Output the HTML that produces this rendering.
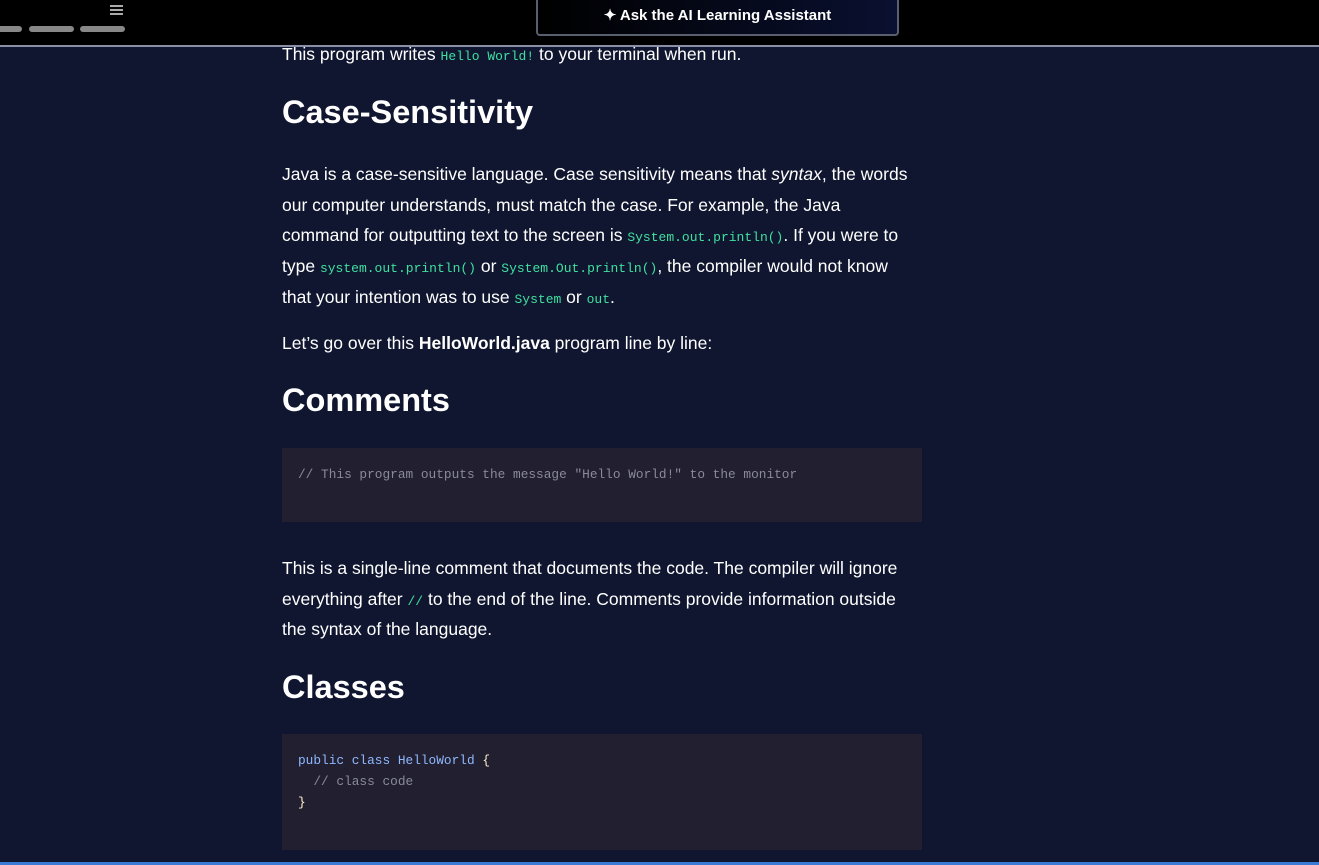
<!DOCTYPE html>
<html><head><meta charset="utf-8"><style>
*{margin:0;padding:0;box-sizing:border-box}
body{width:1319px;height:865px;overflow:hidden;background:#10162f;font-family:"Liberation Sans",sans-serif;color:#fff;position:relative}
.top{position:absolute;left:0;top:0;width:1319px;height:47px;background:#000;border-bottom:2px solid #8a8fa8}
.bar{position:absolute;top:26px;height:6px;border-radius:3px;background:#888}
.ham{position:absolute;left:110px;top:5px;width:13px}
.ham i{display:block;height:2px;background:#aaa;margin-bottom:2px}
.btn{position:absolute;left:536px;top:-4px;width:363px;height:40px;border:2px solid #5a5f70;border-radius:4px;background:linear-gradient(90deg,#000,#0a1030);font-weight:bold;font-size:15px;text-align:center;line-height:36px}
.c{position:absolute;left:282px;width:640px}
p.c{width:636px}
p{font-size:17.5px;line-height:30.7px}
h2{font-size:32.5px;font-weight:bold}
code{font-family:"Liberation Mono",monospace;font-size:13px;color:#3fe0a0;line-height:0}
.pre{position:absolute;left:282px;width:640px;background:#211f30;font-family:"Liberation Mono",monospace;font-size:12.8px;line-height:21px;padding:16px;color:#8a8a98}
.k{color:#8fb8ff}.w{color:#fff2cc}
.bl{position:absolute;left:0;bottom:0;width:1319px;height:3px;background:#3a7bd5}
</style></head><body>
<div class="top">
<div class="bar" style="left:-10px;width:32px"></div><div class="bar" style="left:29px;width:45px"></div><div class="bar" style="left:80px;width:45px"></div>
<div class="ham"><i></i><i></i><i></i></div>
<div class="btn">✦ Ask the AI Learning Assistant</div>
</div>
<p class="c" style="top:39px">This program writes <code>Hello World!</code> to your terminal when run.</p>
<h2 class="c" style="top:94px">Case-Sensitivity</h2>
<p class="c" style="top:159px">Java is a case-sensitive language. Case sensitivity means that <i>syntax</i>, the words our computer understands, must match the case. For example, the Java command for outputting text to the screen is <code>System.out.println()</code>. If you were to type <code>system.out.println()</code> or <code>System.Out.println()</code>, the compiler would not know that your intention was to use <code>System</code> or <code>out</code>.</p>
<p class="c" style="top:328px">Let’s go over this <b>HelloWorld.java</b> program line by line:</p>
<h2 class="c" style="top:382px">Comments</h2>
<div class="pre" style="top:448px;height:74px">// This program outputs the message "Hello World!" to the monitor</div>
<p class="c" style="top:553px">This is a single-line comment that documents the code. The compiler will ignore everything after <code>//</code> to the end of the line. Comments provide information outside the syntax of the language.</p>
<h2 class="c" style="top:669px">Classes</h2>
<div class="pre" style="top:734px;height:116px"><span class="k">public class HelloWorld</span> <span class="w">{</span><br>&nbsp;&nbsp;// class code<br><span class="w">}</span></div>
<div class="bl"></div>
</body></html>
